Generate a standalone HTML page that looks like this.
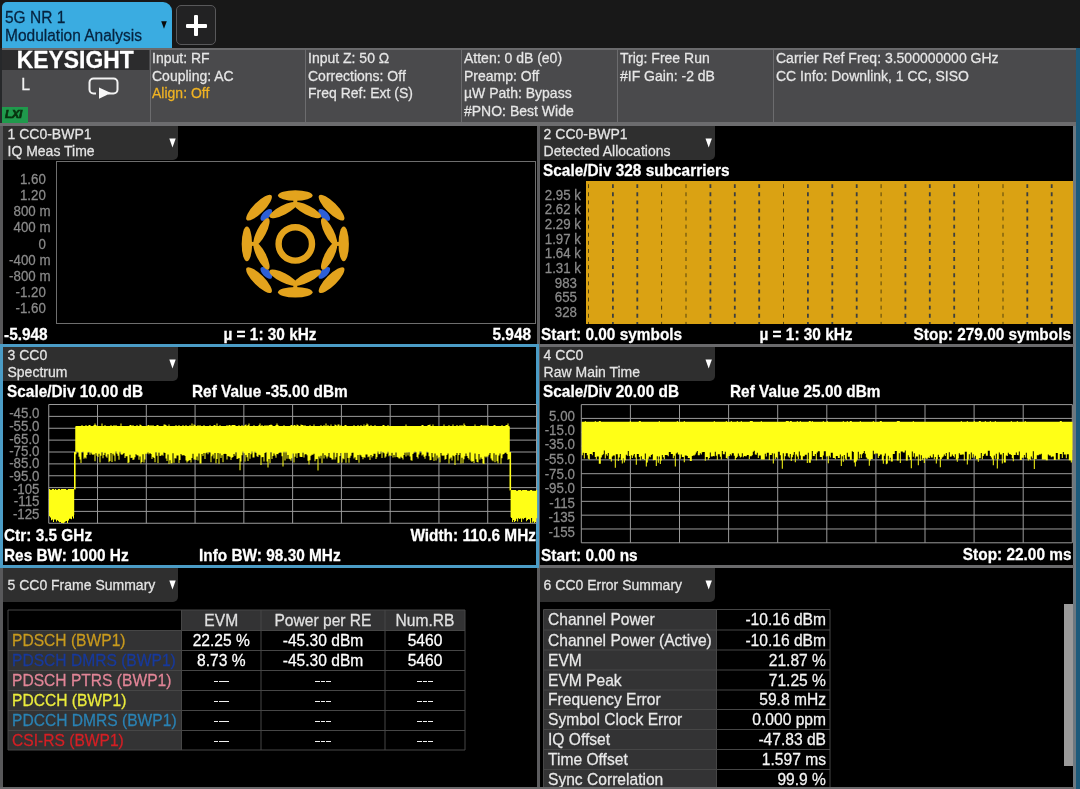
<!DOCTYPE html>
<html><head><meta charset="utf-8"><title>5G NR Modulation Analysis</title>
<style>
html,body{margin:0;padding:0;}
body{width:1080px;height:789px;overflow:hidden;position:relative;background:#181818;font-family:'Liberation Sans',sans-serif;will-change:transform;}
.t{position:absolute;white-space:nowrap;-webkit-text-stroke:0.25px;}
.r{position:absolute;}
svg{position:absolute;left:0;top:0;}
</style></head><body>

<div class="r" style="left:2px;top:1.5px;width:170px;height:47.5px;background:#3aace1;border-radius:5px 9px 0 0;"></div>
<div class="t" style="left:5px;top:9.29px;font-size:15.5px;line-height:17.82px;color:#06233f;font-weight:400;transform:scaleY(1.02);">5G NR 1</div>
<div class="t" style="left:5px;top:26.59px;font-size:15.5px;line-height:17.82px;color:#06233f;font-weight:400;transform:scaleY(1.02);">Modulation Analysis</div>
<svg width="1080" height="60"><path d="M161.2 21.3 L166.8 21.3 L164 28.8 Z" fill="#0a0a0a"/></svg>
<div class="r" style="left:176px;top:5px;width:38px;height:38px;background:#222223;border:1px solid #58585a;border-radius:5px;box-sizing:content-box;"></div>
<div class="r" style="left:186px;top:23.5px;width:20.5px;height:4px;background:#fff;border-radius:1px;"></div>
<div class="r" style="left:194.2px;top:15px;width:4px;height:20.5px;background:#fff;border-radius:1px;"></div>
<div class="r" style="left:0px;top:48px;width:1075.5px;height:75px;background:#4a4a4c;"></div>
<div class="r" style="left:0px;top:48px;width:1075.5px;height:1.5px;background:#6a6a6c;"></div>
<div class="r" style="left:0px;top:122.2px;width:1075.5px;height:3.8px;background:#6c6c6e;"></div>
<div class="r" style="left:1075.6px;top:48px;width:4.4px;height:741px;background:#1c5a7b;"></div>
<div class="r" style="left:1072.7px;top:126px;width:3px;height:663px;background:#6c7880;"></div>
<div class="r" style="left:1.5px;top:49.5px;width:147.5px;height:20.5px;background:#2c2c2d;"></div>
<div class="r" style="left:0px;top:48px;width:1.5px;height:75px;background:#26282a;"></div>
<div class="t" style="left:-124.8px;width:400px;text-align:center;top:47.34px;font-size:22.9px;line-height:26.33px;color:#ffffff;font-weight:700;transform:scaleY(1.03);">KEYSIGHT</div>
<div class="t" style="left:21.3px;top:76.12px;font-size:15.8px;line-height:18.17px;color:#f0f0f0;font-weight:400;transform:scaleY(1.02);">L</div>
<svg width="1080" height="130"><rect x="89.5" y="78.5" width="28" height="15" rx="4" ry="4" fill="none" stroke="#f2f2f2" stroke-width="2"/>
<rect x="96" y="91" width="12" height="5" fill="#4a4a4c"/>
<path d="M99 87.5 L111 93 L99 98.8 Z" fill="#f7f7f7"/></svg>
<div class="r" style="left:2px;top:107px;width:26px;height:16px;background:#1f9a4c;"></div>
<div class="t" style="left:5px;top:108.39px;font-size:11.5px;line-height:13.22px;color:#08330f;font-weight:700;font-style:italic;letter-spacing:-0.3px;-webkit-text-stroke:0.7px #08330f;transform:scaleY(1.02);">LXI</div>
<div class="r" style="left:150px;top:49px;width:1.4px;height:74px;background:#6c6c6e;"></div>
<div class="r" style="left:305px;top:49px;width:1.4px;height:74px;background:#6c6c6e;"></div>
<div class="r" style="left:461px;top:49px;width:1.4px;height:74px;background:#6c6c6e;"></div>
<div class="r" style="left:617px;top:49px;width:1.4px;height:74px;background:#6c6c6e;"></div>
<div class="r" style="left:773px;top:49px;width:1.4px;height:74px;background:#6c6c6e;"></div>
<div class="t" style="left:152px;top:49.75px;font-size:14px;line-height:16.1px;color:#e6e6e6;font-weight:400;transform:scaleY(1.02);">Input: RF</div>
<div class="t" style="left:152px;top:67.50px;font-size:14px;line-height:16.1px;color:#e6e6e6;font-weight:400;transform:scaleY(1.02);">Coupling: AC</div>
<div class="t" style="left:152px;top:85.25px;font-size:14px;line-height:16.1px;color:#e6e6e6;font-weight:400;transform:scaleY(1.02);"><span style="color:#f0b323">Align: Off</span></div>
<div class="t" style="left:308px;top:49.75px;font-size:14px;line-height:16.1px;color:#e6e6e6;font-weight:400;transform:scaleY(1.02);">Input Z: 50 &#937;</div>
<div class="t" style="left:308px;top:67.50px;font-size:14px;line-height:16.1px;color:#e6e6e6;font-weight:400;transform:scaleY(1.02);">Corrections: Off</div>
<div class="t" style="left:308px;top:85.25px;font-size:14px;line-height:16.1px;color:#e6e6e6;font-weight:400;transform:scaleY(1.02);">Freq Ref: Ext (S)</div>
<div class="t" style="left:464px;top:49.75px;font-size:14px;line-height:16.1px;color:#e6e6e6;font-weight:400;transform:scaleY(1.02);">Atten: 0 dB (e0)</div>
<div class="t" style="left:464px;top:67.50px;font-size:14px;line-height:16.1px;color:#e6e6e6;font-weight:400;transform:scaleY(1.02);">Preamp: Off</div>
<div class="t" style="left:464px;top:85.25px;font-size:14px;line-height:16.1px;color:#e6e6e6;font-weight:400;transform:scaleY(1.02);">&#181;W Path: Bypass</div>
<div class="t" style="left:464px;top:103.00px;font-size:14px;line-height:16.1px;color:#e6e6e6;font-weight:400;transform:scaleY(1.02);">#PNO: Best Wide</div>
<div class="t" style="left:620px;top:49.75px;font-size:14px;line-height:16.1px;color:#e6e6e6;font-weight:400;transform:scaleY(1.02);">Trig: Free Run</div>
<div class="t" style="left:620px;top:67.50px;font-size:14px;line-height:16.1px;color:#e6e6e6;font-weight:400;transform:scaleY(1.02);">#IF Gain: -2 dB</div>
<div class="t" style="left:776px;top:49.75px;font-size:14px;line-height:16.1px;color:#e6e6e6;font-weight:400;transform:scaleY(1.02);">Carrier Ref Freq: 3.500000000 GHz</div>
<div class="t" style="left:776px;top:67.50px;font-size:14px;line-height:16.1px;color:#e6e6e6;font-weight:400;transform:scaleY(1.02);">CC Info: Downlink, 1 CC, SISO</div>
<div class="r" style="left:0px;top:126px;width:1073px;height:663px;background:#000;"></div>
<div class="r" style="left:0px;top:126px;width:3px;height:663px;background:#58585a;"></div>
<div class="r" style="left:536.7px;top:126px;width:2.9px;height:663px;background:#5c5c5e;"></div>
<div class="r" style="left:0px;top:344px;width:1074px;height:2.5px;background:#6a6a6c;"></div>
<div class="r" style="left:0px;top:564.9px;width:1074px;height:2.9px;background:#6a6a6c;"></div>
<div class="r" style="left:0px;top:786.5px;width:1074px;height:2.5px;background:#6a6a6c;"></div>
<div class="r" style="left:0;top:343.5px;width:533.2px;height:218.6px;border:3px solid #4b9cc6;"></div>
<div class="r" style="left:3px;top:126px;width:175px;height:34px;background:#2f2f2f;border-radius:0 0 5px 0;"></div><div class="t" style="left:7.5px;top:126.45px;font-size:14px;line-height:16.1px;color:#e4e4e4;font-weight:400;transform:scaleY(1.02);">1 CC0-BWP1</div><div class="t" style="left:7.5px;top:143.45px;font-size:14px;line-height:16.1px;color:#e4e4e4;font-weight:400;transform:scaleY(1.02);">IQ Meas Time</div><svg width="1080" height="789"><path d="M169.3 138.5 L175.7 138.5 L172.5 147.5 Z" fill="#fff"/></svg>
<div class="r" style="left:56px;top:161px;width:478px;height:161px;border:1px solid #6e6e6e;"></div>
<div class="t" style="right:1034.2px;top:171.75px;font-size:13.3px;line-height:15.29px;color:#8a8a8a;font-weight:400;transform:scaleY(1.07);">1.60</div>
<div class="t" style="right:1034.2px;top:187.95px;font-size:13.3px;line-height:15.29px;color:#8a8a8a;font-weight:400;transform:scaleY(1.07);">1.20</div>
<div class="t" style="right:1029.5px;top:204.16px;font-size:13.3px;line-height:15.29px;color:#8a8a8a;font-weight:400;transform:scaleY(1.07);">800 m</div>
<div class="t" style="right:1029.5px;top:220.35px;font-size:13.3px;line-height:15.29px;color:#8a8a8a;font-weight:400;transform:scaleY(1.07);">400 m</div>
<div class="t" style="right:1034.2px;top:236.55px;font-size:13.3px;line-height:15.29px;color:#8a8a8a;font-weight:400;transform:scaleY(1.07);">0</div>
<div class="t" style="right:1029.5px;top:252.75px;font-size:13.3px;line-height:15.29px;color:#8a8a8a;font-weight:400;transform:scaleY(1.07);">-400 m</div>
<div class="t" style="right:1029.5px;top:268.96px;font-size:13.3px;line-height:15.29px;color:#8a8a8a;font-weight:400;transform:scaleY(1.07);">-800 m</div>
<div class="t" style="right:1034.2px;top:285.16px;font-size:13.3px;line-height:15.29px;color:#8a8a8a;font-weight:400;transform:scaleY(1.07);">-1.20</div>
<div class="t" style="right:1034.2px;top:301.36px;font-size:13.3px;line-height:15.29px;color:#8a8a8a;font-weight:400;transform:scaleY(1.07);">-1.60</div>
<div class="t" style="left:4px;top:326.44px;font-size:15.4px;line-height:17.71px;color:#fff;font-weight:700;transform:scaleY(1.02);">-5.948</div>
<div class="t" style="left:70px;width:400px;text-align:center;top:326.44px;font-size:15.4px;line-height:17.71px;color:#fff;font-weight:700;transform:scaleY(1.02);">&#181; = 1: 30 kHz</div>
<div class="t" style="right:549px;top:326.44px;font-size:15.4px;line-height:17.71px;color:#fff;font-weight:700;transform:scaleY(1.02);">5.948</div>
<svg width="1080" height="789"><ellipse cx="295.3" cy="202.9" rx="7.5" ry="3.6" fill="#2d5fd6" transform="rotate(45 295.3 243.9)"/><ellipse cx="295.3" cy="202.9" rx="7.5" ry="3.6" fill="#2d5fd6" transform="rotate(135 295.3 243.9)"/><ellipse cx="295.3" cy="202.9" rx="7.5" ry="3.6" fill="#2d5fd6" transform="rotate(225 295.3 243.9)"/><ellipse cx="295.3" cy="202.9" rx="7.5" ry="3.6" fill="#2d5fd6" transform="rotate(315 295.3 243.9)"/><g transform="rotate(0 295.3 243.9)" fill="#e3a31d"><ellipse cx="295.3" cy="195.5" rx="17.3" ry="5.2"/><ellipse cx="295.3" cy="192.60000000000002" rx="17.4" ry="5.4" transform="rotate(45 295.3 243.9)"/><ellipse cx="283.3" cy="210.10000000000002" rx="15.4" ry="4.6" transform="rotate(-27 283.3 210.10000000000002)"/><ellipse cx="307.3" cy="210.10000000000002" rx="15.4" ry="4.6" transform="rotate(27 307.3 210.10000000000002)"/><rect x="293.3" y="198.9" width="4" height="5"/></g><g transform="rotate(90 295.3 243.9)" fill="#e3a31d"><ellipse cx="295.3" cy="195.5" rx="17.3" ry="5.2"/><ellipse cx="295.3" cy="192.60000000000002" rx="17.4" ry="5.4" transform="rotate(45 295.3 243.9)"/><ellipse cx="283.3" cy="210.10000000000002" rx="15.4" ry="4.6" transform="rotate(-27 283.3 210.10000000000002)"/><ellipse cx="307.3" cy="210.10000000000002" rx="15.4" ry="4.6" transform="rotate(27 307.3 210.10000000000002)"/><rect x="293.3" y="198.9" width="4" height="5"/></g><g transform="rotate(180 295.3 243.9)" fill="#e3a31d"><ellipse cx="295.3" cy="195.5" rx="17.3" ry="5.2"/><ellipse cx="295.3" cy="192.60000000000002" rx="17.4" ry="5.4" transform="rotate(45 295.3 243.9)"/><ellipse cx="283.3" cy="210.10000000000002" rx="15.4" ry="4.6" transform="rotate(-27 283.3 210.10000000000002)"/><ellipse cx="307.3" cy="210.10000000000002" rx="15.4" ry="4.6" transform="rotate(27 307.3 210.10000000000002)"/><rect x="293.3" y="198.9" width="4" height="5"/></g><g transform="rotate(270 295.3 243.9)" fill="#e3a31d"><ellipse cx="295.3" cy="195.5" rx="17.3" ry="5.2"/><ellipse cx="295.3" cy="192.60000000000002" rx="17.4" ry="5.4" transform="rotate(45 295.3 243.9)"/><ellipse cx="283.3" cy="210.10000000000002" rx="15.4" ry="4.6" transform="rotate(-27 283.3 210.10000000000002)"/><ellipse cx="307.3" cy="210.10000000000002" rx="15.4" ry="4.6" transform="rotate(27 307.3 210.10000000000002)"/><rect x="293.3" y="198.9" width="4" height="5"/></g><circle cx="295.3" cy="243.9" r="16.7" fill="none" stroke="#e3a31d" stroke-width="6.4"/></svg>
<div class="r" style="left:540px;top:126px;width:175px;height:34px;background:#2f2f2f;border-radius:0 0 5px 0;"></div><div class="t" style="left:543.6px;top:126.45px;font-size:14px;line-height:16.1px;color:#e4e4e4;font-weight:400;transform:scaleY(1.02);">2 CC0-BWP1</div><div class="t" style="left:543.6px;top:143.45px;font-size:14px;line-height:16.1px;color:#e4e4e4;font-weight:400;transform:scaleY(1.02);">Detected Allocations</div><svg width="1080" height="789"><path d="M705.5 138.5 L711.9000000000001 138.5 L708.7 147.5 Z" fill="#fff"/></svg>
<div class="t" style="left:543px;top:162.25px;font-size:15.4px;line-height:17.71px;color:#fff;font-weight:700;transform:scaleY(1.02);">Scale/Div 328 subcarriers</div>
<div class="r" style="left:586.2px;top:181px;width:486.5px;height:143px;background:#daa213;"></div>
<svg width="1080" height="789"><line x1="588.5" y1="184.2" x2="588.5" y2="324" stroke="#55440e" stroke-width="1" stroke-dasharray="3.9 4.2"/><line x1="612.9" y1="184.2" x2="612.9" y2="324" stroke="#3c3f40" stroke-width="1.8" stroke-dasharray="3.9 4.2"/><line x1="637.3" y1="184.2" x2="637.3" y2="324" stroke="#3c3f40" stroke-width="1.8" stroke-dasharray="3.9 4.2"/><line x1="661.6" y1="184.2" x2="661.6" y2="324" stroke="#55440e" stroke-width="1" stroke-dasharray="3.9 4.2"/><line x1="686.0" y1="184.2" x2="686.0" y2="324" stroke="#55440e" stroke-width="1" stroke-dasharray="3.9 4.2"/><line x1="710.4" y1="184.2" x2="710.4" y2="324" stroke="#3c3f40" stroke-width="1.8" stroke-dasharray="3.9 4.2"/><line x1="734.8" y1="184.2" x2="734.8" y2="324" stroke="#3c3f40" stroke-width="1.8" stroke-dasharray="3.9 4.2"/><line x1="759.2" y1="184.2" x2="759.2" y2="324" stroke="#3c3f40" stroke-width="1.8" stroke-dasharray="3.9 4.2"/><line x1="783.5" y1="184.2" x2="783.5" y2="324" stroke="#55440e" stroke-width="1" stroke-dasharray="3.9 4.2"/><line x1="807.9" y1="184.2" x2="807.9" y2="324" stroke="#3c3f40" stroke-width="1.8" stroke-dasharray="3.9 4.2"/><line x1="832.3" y1="184.2" x2="832.3" y2="324" stroke="#3c3f40" stroke-width="1.8" stroke-dasharray="3.9 4.2"/><line x1="856.7" y1="184.2" x2="856.7" y2="324" stroke="#3c3f40" stroke-width="1.8" stroke-dasharray="3.9 4.2"/><line x1="881.1" y1="184.2" x2="881.1" y2="324" stroke="#55440e" stroke-width="1" stroke-dasharray="3.9 4.2"/><line x1="905.4" y1="184.2" x2="905.4" y2="324" stroke="#3c3f40" stroke-width="1.8" stroke-dasharray="3.9 4.2"/><line x1="929.8" y1="184.2" x2="929.8" y2="324" stroke="#3c3f40" stroke-width="1.8" stroke-dasharray="3.9 4.2"/><line x1="954.2" y1="184.2" x2="954.2" y2="324" stroke="#3c3f40" stroke-width="1.8" stroke-dasharray="3.9 4.2"/><line x1="978.6" y1="184.2" x2="978.6" y2="324" stroke="#55440e" stroke-width="1" stroke-dasharray="3.9 4.2"/><line x1="1003.0" y1="184.2" x2="1003.0" y2="324" stroke="#55440e" stroke-width="1" stroke-dasharray="3.9 4.2"/><line x1="1027.3" y1="184.2" x2="1027.3" y2="324" stroke="#3c3f40" stroke-width="1.8" stroke-dasharray="3.9 4.2"/><line x1="1051.7" y1="184.2" x2="1051.7" y2="324" stroke="#3c3f40" stroke-width="1.8" stroke-dasharray="3.9 4.2"/></svg>
<div class="t" style="right:499px;top:187.66px;font-size:13.3px;line-height:15.29px;color:#8a8a8a;font-weight:400;transform:scaleY(1.07);">2.95 k</div>
<div class="t" style="right:499px;top:202.34px;font-size:13.3px;line-height:15.29px;color:#8a8a8a;font-weight:400;transform:scaleY(1.07);">2.62 k</div>
<div class="t" style="right:499px;top:217.02px;font-size:13.3px;line-height:15.29px;color:#8a8a8a;font-weight:400;transform:scaleY(1.07);">2.29 k</div>
<div class="t" style="right:499px;top:231.69px;font-size:13.3px;line-height:15.29px;color:#8a8a8a;font-weight:400;transform:scaleY(1.07);">1.97 k</div>
<div class="t" style="right:499px;top:246.38px;font-size:13.3px;line-height:15.29px;color:#8a8a8a;font-weight:400;transform:scaleY(1.07);">1.64 k</div>
<div class="t" style="right:499px;top:261.06px;font-size:13.3px;line-height:15.29px;color:#8a8a8a;font-weight:400;transform:scaleY(1.07);">1.31 k</div>
<div class="t" style="right:503px;top:275.74px;font-size:13.3px;line-height:15.29px;color:#8a8a8a;font-weight:400;transform:scaleY(1.07);">983</div>
<div class="t" style="right:503px;top:290.42px;font-size:13.3px;line-height:15.29px;color:#8a8a8a;font-weight:400;transform:scaleY(1.07);">655</div>
<div class="t" style="right:503px;top:305.10px;font-size:13.3px;line-height:15.29px;color:#8a8a8a;font-weight:400;transform:scaleY(1.07);">328</div>
<div class="t" style="left:541px;top:326.44px;font-size:15.4px;line-height:17.71px;color:#fff;font-weight:700;transform:scaleY(1.02);">Start: 0.00 symbols</div>
<div class="t" style="left:606px;width:400px;text-align:center;top:326.44px;font-size:15.4px;line-height:17.71px;color:#fff;font-weight:700;transform:scaleY(1.02);">&#181; = 1: 30 kHz</div>
<div class="t" style="right:9px;top:326.44px;font-size:15.4px;line-height:17.71px;color:#fff;font-weight:700;transform:scaleY(1.02);">Stop: 279.00 symbols</div>
<div class="r" style="left:3px;top:347px;width:175px;height:34px;background:#2f2f2f;border-radius:0 0 5px 0;"></div><div class="t" style="left:7.5px;top:347.45px;font-size:14px;line-height:16.1px;color:#e4e4e4;font-weight:400;transform:scaleY(1.02);">3 CC0</div><div class="t" style="left:7.5px;top:364.45px;font-size:14px;line-height:16.1px;color:#e4e4e4;font-weight:400;transform:scaleY(1.02);">Spectrum</div><svg width="1080" height="789"><path d="M169.3 359.5 L175.7 359.5 L172.5 368.5 Z" fill="#fff"/></svg>
<div class="t" style="left:7px;top:383.04px;font-size:15.4px;line-height:17.71px;color:#fff;font-weight:700;transform:scaleY(1.02);">Scale/Div 10.00 dB</div>
<div class="t" style="left:192px;top:383.04px;font-size:15.4px;line-height:17.71px;color:#fff;font-weight:700;transform:scaleY(1.02);">Ref Value -35.00 dBm</div>
<svg width="1080" height="789"><line x1="48.75" y1="404.5" x2="48.75" y2="523.25" stroke="#9a9a9a" stroke-width="1"/><line x1="48.75" y1="404.50" x2="536.5" y2="404.50" stroke="#9a9a9a" stroke-width="1"/><line x1="97.53" y1="404.5" x2="97.53" y2="523.25" stroke="#9a9a9a" stroke-width="1"/><line x1="48.75" y1="416.38" x2="536.5" y2="416.38" stroke="#9a9a9a" stroke-width="1"/><line x1="146.30" y1="404.5" x2="146.30" y2="523.25" stroke="#9a9a9a" stroke-width="1"/><line x1="48.75" y1="428.25" x2="536.5" y2="428.25" stroke="#9a9a9a" stroke-width="1"/><line x1="195.07" y1="404.5" x2="195.07" y2="523.25" stroke="#9a9a9a" stroke-width="1"/><line x1="48.75" y1="440.12" x2="536.5" y2="440.12" stroke="#9a9a9a" stroke-width="1"/><line x1="243.85" y1="404.5" x2="243.85" y2="523.25" stroke="#9a9a9a" stroke-width="1"/><line x1="48.75" y1="452.00" x2="536.5" y2="452.00" stroke="#9a9a9a" stroke-width="1"/><line x1="292.62" y1="404.5" x2="292.62" y2="523.25" stroke="#9a9a9a" stroke-width="1"/><line x1="48.75" y1="463.88" x2="536.5" y2="463.88" stroke="#9a9a9a" stroke-width="1"/><line x1="341.40" y1="404.5" x2="341.40" y2="523.25" stroke="#9a9a9a" stroke-width="1"/><line x1="48.75" y1="475.75" x2="536.5" y2="475.75" stroke="#9a9a9a" stroke-width="1"/><line x1="390.18" y1="404.5" x2="390.18" y2="523.25" stroke="#9a9a9a" stroke-width="1"/><line x1="48.75" y1="487.62" x2="536.5" y2="487.62" stroke="#9a9a9a" stroke-width="1"/><line x1="438.95" y1="404.5" x2="438.95" y2="523.25" stroke="#9a9a9a" stroke-width="1"/><line x1="48.75" y1="499.50" x2="536.5" y2="499.50" stroke="#9a9a9a" stroke-width="1"/><line x1="487.73" y1="404.5" x2="487.73" y2="523.25" stroke="#9a9a9a" stroke-width="1"/><line x1="48.75" y1="511.38" x2="536.5" y2="511.38" stroke="#9a9a9a" stroke-width="1"/><line x1="536.50" y1="404.5" x2="536.50" y2="523.25" stroke="#9a9a9a" stroke-width="1"/><line x1="48.75" y1="523.25" x2="536.5" y2="523.25" stroke="#9a9a9a" stroke-width="1"/><rect x="75.5" y="427" width="434" height="24.5" fill="#ffff16"/><rect x="49" y="490" width="25.2" height="25" fill="#ffff16"/><rect x="510.6" y="491" width="25.8" height="26" fill="#ffff16"/><path d="M49.0 489.0h1.0V516.3h-1.0zM50.0 489.8h1.0V517.5h-1.0zM51.0 489.8h1.0V520.2h-1.0zM52.0 489.0h1.0V519.5h-1.0zM53.0 489.0h1.0V521.9h-1.0zM54.0 489.8h1.0V519.5h-1.0zM55.0 489.0h1.0V519.6h-1.0zM56.0 489.8h1.0V521.4h-1.0zM57.0 489.8h1.0V520.3h-1.0zM58.0 489.0h1.0V521.2h-1.0zM59.0 489.0h1.0V522.2h-1.0zM60.0 489.8h1.0V521.9h-1.0zM61.0 489.0h1.0V523.0h-1.0zM62.0 489.0h1.0V523.1h-1.0zM63.0 489.0h1.0V523.2h-1.0zM64.0 489.0h1.0V522.6h-1.0zM65.0 489.0h1.0V521.4h-1.0zM66.0 489.8h1.0V521.1h-1.0zM67.0 489.8h1.0V523.0h-1.0zM68.0 489.0h1.0V520.5h-1.0zM69.0 489.0h1.0V518.7h-1.0zM70.0 489.0h1.0V518.7h-1.0zM71.0 489.0h1.0V519.2h-1.0zM72.0 489.0h1.0V516.6h-1.0zM73.0 489.0h1.0V518.6h-1.0zM74.0 452.0h1.6V489.5h-1.6zM75.5 426.0h1.0V454.2h-1.0zM76.5 426.0h1.0V451.3h-1.0zM77.5 426.0h1.0V452.3h-1.0zM78.5 426.0h1.0V456.7h-1.0zM79.5 426.0h1.0V459.6h-1.0zM80.5 426.0h1.0V463.1h-1.0zM81.5 425.0h1.0V452.0h-1.0zM82.5 426.0h1.0V451.4h-1.0zM83.5 426.0h1.0V458.8h-1.0zM84.5 426.0h1.0V457.6h-1.0zM85.5 425.0h1.0V458.5h-1.0zM86.5 426.0h1.0V455.1h-1.0zM87.5 426.0h1.0V452.3h-1.0zM88.5 425.0h1.0V451.7h-1.0zM89.5 425.0h1.0V454.8h-1.0zM90.5 426.0h1.0V452.5h-1.0zM91.5 426.0h1.0V454.3h-1.0zM92.5 426.0h1.0V455.1h-1.0zM93.5 425.0h1.0V454.2h-1.0zM94.5 423.5h1.0V461.3h-1.0zM95.5 425.0h1.0V453.2h-1.0zM96.5 426.0h1.0V455.7h-1.0zM97.5 426.0h1.0V456.9h-1.0zM98.5 426.0h1.0V453.8h-1.0zM99.5 426.0h1.0V462.4h-1.0zM100.5 426.0h1.0V455.8h-1.0zM101.5 423.5h1.0V451.9h-1.0zM102.5 426.0h1.0V458.2h-1.0zM103.5 426.0h1.0V454.9h-1.0zM104.5 425.0h1.0V452.7h-1.0zM105.5 426.0h1.0V456.6h-1.0zM106.5 426.0h1.0V457.7h-1.0zM107.5 426.0h1.0V454.3h-1.0zM108.5 426.0h1.0V462.3h-1.0zM109.5 426.0h1.0V461.0h-1.0zM110.5 425.0h1.0V453.0h-1.0zM111.5 426.0h1.0V462.1h-1.0zM112.5 426.0h1.0V453.8h-1.0zM113.5 425.0h1.0V455.5h-1.0zM114.5 426.0h1.0V461.3h-1.0zM115.5 425.0h1.0V450.9h-1.0zM116.5 426.0h1.0V453.8h-1.0zM117.5 426.0h1.0V455.8h-1.0zM118.5 426.0h1.0V459.8h-1.0zM119.5 426.0h1.0V451.6h-1.0zM120.5 423.5h1.0V454.2h-1.0zM121.5 426.0h1.0V455.0h-1.0zM122.5 426.0h1.0V454.1h-1.0zM123.5 426.0h1.0V453.0h-1.0zM124.5 426.0h1.0V457.9h-1.0zM125.5 426.0h1.0V456.2h-1.0zM126.5 426.0h1.0V456.2h-1.0zM127.5 426.0h1.0V462.9h-1.0zM128.5 426.0h1.0V462.5h-1.0zM129.5 425.0h1.0V454.8h-1.0zM130.5 425.0h1.0V458.1h-1.0zM131.5 426.0h1.0V457.7h-1.0zM132.5 425.0h1.0V459.9h-1.0zM133.5 426.0h1.0V459.4h-1.0zM134.5 426.0h1.0V457.3h-1.0zM135.5 426.0h1.0V454.2h-1.0zM136.5 425.0h1.0V455.2h-1.0zM137.5 426.0h1.0V455.5h-1.0zM138.5 426.0h1.0V459.8h-1.0zM139.5 424.5h1.0V456.5h-1.0zM140.5 425.0h1.0V463.4h-1.0zM141.5 426.0h1.0V462.1h-1.0zM142.5 426.0h1.0V454.3h-1.0zM143.5 426.0h1.0V462.4h-1.0zM144.5 426.0h1.0V459.6h-1.0zM145.5 426.0h1.0V453.8h-1.0zM146.5 426.0h1.0V453.7h-1.0zM147.5 425.0h1.0V452.2h-1.0zM148.5 425.0h1.0V454.3h-1.0zM149.5 426.0h1.0V453.0h-1.0zM150.5 425.0h1.0V454.1h-1.0zM151.5 426.0h1.0V459.1h-1.0zM152.5 425.0h1.0V457.0h-1.0zM153.5 426.0h1.0V457.9h-1.0zM154.5 426.0h1.0V462.3h-1.0zM155.5 426.0h1.0V451.9h-1.0zM156.5 425.0h1.0V455.8h-1.0zM157.5 425.0h1.0V463.0h-1.0zM158.5 426.0h1.0V452.6h-1.0zM159.5 426.0h1.0V455.9h-1.0zM160.5 426.0h1.0V455.8h-1.0zM161.5 426.0h1.0V454.8h-1.0zM162.5 426.0h1.0V455.7h-1.0zM163.5 424.5h1.0V452.2h-1.0zM164.5 424.5h1.0V452.9h-1.0zM165.5 425.0h1.0V458.5h-1.0zM166.5 426.0h1.0V461.1h-1.0zM167.5 426.0h1.0V454.5h-1.0zM168.5 424.5h1.0V463.9h-1.0zM169.5 426.0h1.0V460.2h-1.0zM170.5 426.0h1.0V463.6h-1.0zM171.5 426.0h1.0V463.2h-1.0zM172.5 426.0h1.0V453.3h-1.0zM173.5 426.0h1.0V462.8h-1.0zM174.5 426.0h1.0V458.3h-1.0zM175.5 425.0h1.0V458.4h-1.0zM176.5 426.0h1.0V455.5h-1.0zM177.5 426.0h1.0V455.5h-1.0zM178.5 425.0h1.0V462.9h-1.0zM179.5 426.0h1.0V459.9h-1.0zM180.5 426.0h1.0V453.9h-1.0zM181.5 426.0h1.0V455.2h-1.0zM182.5 425.0h1.0V455.5h-1.0zM183.5 426.0h1.0V455.0h-1.0zM184.5 426.0h1.0V456.1h-1.0zM185.5 425.0h1.0V460.5h-1.0zM186.5 426.0h1.0V462.6h-1.0zM187.5 426.0h1.0V461.3h-1.0zM188.5 426.0h1.0V460.5h-1.0zM189.5 425.0h1.0V460.1h-1.0zM190.5 426.0h1.0V462.4h-1.0zM191.5 423.5h1.0V457.9h-1.0zM192.5 426.0h1.0V453.7h-1.0zM193.5 424.5h1.0V459.4h-1.0zM194.5 425.0h1.0V459.6h-1.0zM195.5 426.0h1.0V459.9h-1.0zM196.5 426.0h1.0V456.5h-1.0zM197.5 425.0h1.0V460.6h-1.0zM198.5 426.0h1.0V453.6h-1.0zM199.5 425.0h1.0V463.4h-1.0zM200.5 426.0h1.0V463.6h-1.0zM201.5 426.0h1.0V454.0h-1.0zM202.5 426.0h1.0V456.0h-1.0zM203.5 425.0h1.0V453.1h-1.0zM204.5 426.0h1.0V459.0h-1.0zM205.5 426.0h1.0V453.2h-1.0zM206.5 426.0h1.0V452.2h-1.0zM207.5 426.0h1.0V454.3h-1.0zM208.5 426.0h1.0V452.1h-1.0zM209.5 425.0h1.0V452.3h-1.0zM210.5 426.0h1.0V462.3h-1.0zM211.5 426.0h1.0V456.3h-1.0zM212.5 426.0h1.0V454.6h-1.0zM213.5 425.0h1.0V458.6h-1.0zM214.5 425.0h1.0V453.0h-1.0zM215.5 426.0h1.0V463.2h-1.0zM216.5 423.5h1.0V458.9h-1.0zM217.5 426.0h1.0V453.1h-1.0zM218.5 426.0h1.0V463.8h-1.0zM219.5 425.0h1.0V453.6h-1.0zM220.5 426.0h1.0V458.0h-1.0zM221.5 426.0h1.0V455.3h-1.0zM222.5 426.0h1.0V462.3h-1.0zM223.5 426.0h1.0V454.0h-1.0zM224.5 426.0h1.0V453.7h-1.0zM225.5 426.0h1.0V453.9h-1.0zM226.5 425.0h1.0V459.4h-1.0zM227.5 426.0h1.0V456.1h-1.0zM228.5 425.0h1.0V456.4h-1.0zM229.5 425.0h1.0V456.8h-1.0zM230.5 426.0h1.0V460.0h-1.0zM231.5 425.0h1.0V457.8h-1.0zM232.5 425.0h1.0V456.9h-1.0zM233.5 425.0h1.0V454.0h-1.0zM234.5 425.0h1.0V455.8h-1.0zM235.5 426.0h1.0V452.0h-1.0zM236.5 426.0h1.0V458.9h-1.0zM237.5 426.0h1.0V458.8h-1.0zM238.5 425.0h1.0V458.0h-1.0zM239.5 426.0h1.0V470.3h-1.0zM240.5 426.0h1.0V461.5h-1.0zM241.5 425.0h1.0V455.3h-1.0zM242.5 426.0h1.0V451.3h-1.0zM243.5 426.0h1.0V453.3h-1.0zM244.5 425.0h1.0V461.4h-1.0zM245.5 424.5h1.0V454.9h-1.0zM246.5 426.0h1.0V457.2h-1.0zM247.5 425.0h1.0V461.0h-1.0zM248.5 423.5h1.0V452.9h-1.0zM249.5 426.0h1.0V458.8h-1.0zM250.5 426.0h1.0V454.3h-1.0zM251.5 426.0h1.0V450.1h-1.0zM252.5 426.0h1.0V457.4h-1.0zM253.5 425.0h1.0V457.5h-1.0zM254.5 426.0h1.0V451.6h-1.0zM255.5 426.0h1.0V452.8h-1.0zM256.5 426.0h1.0V456.2h-1.0zM257.5 426.0h1.0V457.0h-1.0zM258.5 425.0h1.0V454.7h-1.0zM259.5 423.5h1.0V455.2h-1.0zM260.5 426.0h1.0V465.0h-1.0zM261.5 425.0h1.0V457.2h-1.0zM262.5 426.0h1.0V456.9h-1.0zM263.5 426.0h1.0V461.5h-1.0zM264.5 425.0h1.0V453.0h-1.0zM265.5 426.0h1.0V452.1h-1.0zM266.5 425.0h1.0V461.4h-1.0zM267.5 426.0h1.0V467.6h-1.0zM268.5 425.0h1.0V459.1h-1.0zM269.5 425.0h1.0V462.9h-1.0zM270.5 424.5h1.0V452.1h-1.0zM271.5 425.0h1.0V459.0h-1.0zM272.5 426.0h1.0V456.0h-1.0zM273.5 426.0h1.0V453.6h-1.0zM274.5 426.0h1.0V455.5h-1.0zM275.5 425.0h1.0V457.8h-1.0zM276.5 423.5h1.0V453.9h-1.0zM277.5 425.0h1.0V454.2h-1.0zM278.5 426.0h1.0V452.9h-1.0zM279.5 426.0h1.0V452.2h-1.0zM280.5 426.0h1.0V452.6h-1.0zM281.5 426.0h1.0V456.2h-1.0zM282.5 426.0h1.0V466.5h-1.0zM283.5 425.0h1.0V451.5h-1.0zM284.5 426.0h1.0V460.5h-1.0zM285.5 426.0h1.0V451.4h-1.0zM286.5 426.0h1.0V458.8h-1.0zM287.5 426.0h1.0V455.0h-1.0zM288.5 426.0h1.0V458.8h-1.0zM289.5 426.0h1.0V459.2h-1.0zM290.5 425.0h1.0V460.7h-1.0zM291.5 425.0h1.0V458.3h-1.0zM292.5 426.0h1.0V453.6h-1.0zM293.5 425.0h1.0V462.4h-1.0zM294.5 425.0h1.0V456.7h-1.0zM295.5 426.0h1.0V453.6h-1.0zM296.5 424.5h1.0V457.9h-1.0zM297.5 425.0h1.0V453.3h-1.0zM298.5 426.0h1.0V452.9h-1.0zM299.5 426.0h1.0V456.7h-1.0zM300.5 424.5h1.0V457.1h-1.0zM301.5 425.0h1.0V457.0h-1.0zM302.5 425.0h1.0V452.5h-1.0zM303.5 426.0h1.0V457.5h-1.0zM304.5 425.0h1.0V454.6h-1.0zM305.5 426.0h1.0V454.0h-1.0zM306.5 426.0h1.0V455.2h-1.0zM307.5 426.0h1.0V460.7h-1.0zM308.5 426.0h1.0V464.4h-1.0zM309.5 425.0h1.0V460.3h-1.0zM310.5 426.0h1.0V455.8h-1.0zM311.5 426.0h1.0V454.7h-1.0zM312.5 426.0h1.0V454.8h-1.0zM313.5 424.5h1.0V453.8h-1.0zM314.5 426.0h1.0V461.2h-1.0zM315.5 426.0h1.0V459.3h-1.0zM316.5 426.0h1.0V459.0h-1.0zM317.5 426.0h1.0V470.5h-1.0zM318.5 426.0h1.0V456.4h-1.0zM319.5 426.0h1.0V458.4h-1.0zM320.5 425.0h1.0V455.8h-1.0zM321.5 426.0h1.0V463.2h-1.0zM322.5 426.0h1.0V453.3h-1.0zM323.5 425.0h1.0V458.5h-1.0zM324.5 426.0h1.0V455.0h-1.0zM325.5 423.5h1.0V456.5h-1.0zM326.5 426.0h1.0V458.5h-1.0zM327.5 425.0h1.0V456.4h-1.0zM328.5 426.0h1.0V453.0h-1.0zM329.5 426.0h1.0V457.4h-1.0zM330.5 424.5h1.0V458.0h-1.0zM331.5 426.0h1.0V459.6h-1.0zM332.5 426.0h1.0V459.5h-1.0zM333.5 426.0h1.0V452.4h-1.0zM334.5 424.5h1.0V459.4h-1.0zM335.5 425.0h1.0V457.3h-1.0zM336.5 426.0h1.0V452.9h-1.0zM337.5 424.5h1.0V462.9h-1.0zM338.5 424.5h1.0V462.7h-1.0zM339.5 426.0h1.0V455.9h-1.0zM340.5 425.0h1.0V452.9h-1.0zM341.5 426.0h1.0V462.5h-1.0zM342.5 426.0h1.0V458.5h-1.0zM343.5 426.0h1.0V459.3h-1.0zM344.5 425.0h1.0V452.8h-1.0zM345.5 425.0h1.0V462.8h-1.0zM346.5 426.0h1.0V452.8h-1.0zM347.5 426.0h1.0V458.1h-1.0zM348.5 426.0h1.0V462.7h-1.0zM349.5 426.0h1.0V457.8h-1.0zM350.5 426.0h1.0V455.7h-1.0zM351.5 426.0h1.0V452.7h-1.0zM352.5 426.0h1.0V452.5h-1.0zM353.5 425.0h1.0V458.6h-1.0zM354.5 426.0h1.0V457.2h-1.0zM355.5 426.0h1.0V459.9h-1.0zM356.5 426.0h1.0V460.1h-1.0zM357.5 425.0h1.0V455.1h-1.0zM358.5 426.0h1.0V462.7h-1.0zM359.5 426.0h1.0V454.8h-1.0zM360.5 425.0h1.0V455.6h-1.0zM361.5 426.0h1.0V457.1h-1.0zM362.5 426.0h1.0V459.3h-1.0zM363.5 424.5h1.0V457.3h-1.0zM364.5 426.0h1.0V457.7h-1.0zM365.5 425.0h1.0V454.6h-1.0zM366.5 423.5h1.0V454.4h-1.0zM367.5 424.5h1.0V457.2h-1.0zM368.5 426.0h1.0V456.4h-1.0zM369.5 426.0h1.0V460.1h-1.0zM370.5 425.0h1.0V455.1h-1.0zM371.5 426.0h1.0V457.6h-1.0zM372.5 426.0h1.0V456.1h-1.0zM373.5 426.0h1.0V453.8h-1.0zM374.5 425.0h1.0V453.7h-1.0zM375.5 426.0h1.0V459.1h-1.0zM376.5 426.0h1.0V457.2h-1.0zM377.5 426.0h1.0V451.1h-1.0zM378.5 426.0h1.0V454.3h-1.0zM379.5 426.0h1.0V454.1h-1.0zM380.5 426.0h1.0V451.0h-1.0zM381.5 426.0h1.0V458.1h-1.0zM382.5 425.0h1.0V451.9h-1.0zM383.5 425.0h1.0V453.2h-1.0zM384.5 426.0h1.0V457.8h-1.0zM385.5 426.0h1.0V456.6h-1.0zM386.5 426.0h1.0V453.8h-1.0zM387.5 425.0h1.0V451.5h-1.0zM388.5 426.0h1.0V456.2h-1.0zM389.5 426.0h1.0V455.2h-1.0zM390.5 426.0h1.0V456.1h-1.0zM391.5 426.0h1.0V452.7h-1.0zM392.5 426.0h1.0V457.5h-1.0zM393.5 426.0h1.0V455.1h-1.0zM394.5 426.0h1.0V457.3h-1.0zM395.5 426.0h1.0V452.2h-1.0zM396.5 426.0h1.0V457.0h-1.0zM397.5 426.0h1.0V457.6h-1.0zM398.5 426.0h1.0V458.4h-1.0zM399.5 426.0h1.0V458.5h-1.0zM400.5 426.0h1.0V456.8h-1.0zM401.5 426.0h1.0V458.1h-1.0zM402.5 426.0h1.0V459.5h-1.0zM403.5 426.0h1.0V455.1h-1.0zM404.5 426.0h1.0V452.4h-1.0zM405.5 424.5h1.0V456.5h-1.0zM406.5 426.0h1.0V452.2h-1.0zM407.5 426.0h1.0V455.6h-1.0zM408.5 426.0h1.0V451.9h-1.0zM409.5 426.0h1.0V456.6h-1.0zM410.5 426.0h1.0V460.3h-1.0zM411.5 426.0h1.0V460.8h-1.0zM412.5 426.0h1.0V453.9h-1.0zM413.5 426.0h1.0V452.5h-1.0zM414.5 426.0h1.0V451.3h-1.0zM415.5 426.0h1.0V452.1h-1.0zM416.5 426.0h1.0V457.1h-1.0zM417.5 426.0h1.0V458.4h-1.0zM418.5 426.0h1.0V454.6h-1.0zM419.5 426.0h1.0V451.0h-1.0zM420.5 426.0h1.0V451.2h-1.0zM421.5 425.0h1.0V455.4h-1.0zM422.5 425.0h1.0V454.6h-1.0zM423.5 426.0h1.0V456.8h-1.0zM424.5 426.0h1.0V458.8h-1.0zM425.5 426.0h1.0V455.8h-1.0zM426.5 426.0h1.0V451.5h-1.0zM427.5 425.0h1.0V452.2h-1.0zM428.5 425.0h1.0V456.3h-1.0zM429.5 424.5h1.0V460.3h-1.0zM430.5 426.0h1.0V459.9h-1.0zM431.5 426.0h1.0V453.0h-1.0zM432.5 424.5h1.0V457.3h-1.0zM433.5 426.0h1.0V460.9h-1.0zM434.5 426.0h1.0V453.6h-1.0zM435.5 426.0h1.0V460.4h-1.0zM436.5 426.0h1.0V455.6h-1.0zM437.5 426.0h1.0V458.5h-1.0zM438.5 426.0h1.0V457.2h-1.0zM439.5 426.0h1.0V462.4h-1.0zM440.5 426.0h1.0V453.1h-1.0zM441.5 426.0h1.0V455.6h-1.0zM442.5 426.0h1.0V455.7h-1.0zM443.5 424.5h1.0V455.4h-1.0zM444.5 426.0h1.0V459.8h-1.0zM445.5 426.0h1.0V459.0h-1.0zM446.5 426.0h1.0V454.9h-1.0zM447.5 426.0h1.0V453.6h-1.0zM448.5 425.0h1.0V463.4h-1.0zM449.5 426.0h1.0V458.7h-1.0zM450.5 426.0h1.0V457.6h-1.0zM451.5 426.0h1.0V460.5h-1.0zM452.5 424.5h1.0V455.6h-1.0zM453.5 426.0h1.0V456.3h-1.0zM454.5 426.0h1.0V465.1h-1.0zM455.5 426.0h1.0V455.1h-1.0zM456.5 425.0h1.0V453.1h-1.0zM457.5 426.0h1.0V460.5h-1.0zM458.5 426.0h1.0V455.1h-1.0zM459.5 425.0h1.0V453.0h-1.0zM460.5 426.0h1.0V463.5h-1.0zM461.5 425.0h1.0V457.8h-1.0zM462.5 426.0h1.0V463.2h-1.0zM463.5 423.5h1.0V459.2h-1.0zM464.5 425.0h1.0V456.2h-1.0zM465.5 426.0h1.0V453.5h-1.0zM466.5 426.0h1.0V456.0h-1.0zM467.5 426.0h1.0V458.1h-1.0zM468.5 426.0h1.0V459.5h-1.0zM469.5 426.0h1.0V452.3h-1.0zM470.5 426.0h1.0V460.8h-1.0zM471.5 426.0h1.0V462.1h-1.0zM472.5 426.0h1.0V461.0h-1.0zM473.5 426.0h1.0V463.1h-1.0zM474.5 424.5h1.0V453.4h-1.0zM475.5 426.0h1.0V459.3h-1.0zM476.5 426.0h1.0V462.0h-1.0zM477.5 426.0h1.0V462.6h-1.0zM478.5 426.0h1.0V453.9h-1.0zM479.5 426.0h1.0V459.5h-1.0zM480.5 425.0h1.0V457.5h-1.0zM481.5 425.0h1.0V459.0h-1.0zM482.5 426.0h1.0V463.4h-1.0zM483.5 425.0h1.0V464.0h-1.0zM484.5 426.0h1.0V456.5h-1.0zM485.5 425.0h1.0V457.4h-1.0zM486.5 426.0h1.0V456.5h-1.0zM487.5 425.0h1.0V456.4h-1.0zM488.5 426.0h1.0V454.7h-1.0zM489.5 426.0h1.0V453.1h-1.0zM490.5 426.0h1.0V458.5h-1.0zM491.5 426.0h1.0V460.3h-1.0zM492.5 426.0h1.0V461.3h-1.0zM493.5 425.0h1.0V453.2h-1.0zM494.5 425.0h1.0V462.3h-1.0zM495.5 426.0h1.0V454.7h-1.0zM496.5 426.0h1.0V461.2h-1.0zM497.5 426.0h1.0V463.2h-1.0zM498.5 426.0h1.0V455.6h-1.0zM499.5 426.0h1.0V453.4h-1.0zM500.5 426.0h1.0V463.7h-1.0zM501.5 425.0h1.0V458.3h-1.0zM502.5 426.0h1.0V454.5h-1.0zM503.5 426.0h1.0V453.9h-1.0zM504.5 426.0h1.0V452.8h-1.0zM505.5 425.0h1.0V452.6h-1.0zM506.5 425.0h1.0V453.9h-1.0zM507.5 423.5h1.0V459.7h-1.0zM508.5 426.0h1.0V459.1h-1.0zM509.5 452.0h1.6V490.5h-1.6zM511.1 490.0h1.0V518.0h-1.0zM512.1 490.0h1.0V522.1h-1.0zM513.1 490.0h1.0V520.0h-1.0zM514.1 490.0h1.0V522.0h-1.0zM515.1 490.0h1.0V521.0h-1.0zM516.1 490.8h1.0V518.7h-1.0zM517.1 490.8h1.0V521.4h-1.0zM518.1 490.0h1.0V518.3h-1.0zM519.1 490.0h1.0V519.0h-1.0zM520.1 490.0h1.0V518.4h-1.0zM521.1 490.8h1.0V522.1h-1.0zM522.1 490.0h1.0V518.4h-1.0zM523.1 490.0h1.0V519.2h-1.0zM524.1 490.0h1.0V518.1h-1.0zM525.1 490.0h1.0V517.8h-1.0zM526.1 490.0h1.0V521.2h-1.0zM527.1 490.8h1.0V520.1h-1.0zM528.1 490.8h1.0V518.9h-1.0zM529.1 490.8h1.0V519.5h-1.0zM530.1 490.0h1.0V523.0h-1.0zM531.1 490.0h1.0V518.0h-1.0zM532.1 490.8h1.0V522.4h-1.0zM533.1 490.8h1.0V521.5h-1.0zM534.1 490.8h1.0V522.9h-1.0zM535.1 490.8h1.0V521.9h-1.0zM536.1 490.0h1.0V518.3h-1.0z" fill="#ffff16"/></svg>
<div class="t" style="right:1040.5px;top:406.11px;font-size:13.3px;line-height:15.29px;color:#8a8a8a;font-weight:400;transform:scaleY(1.07);">-45.0</div>
<div class="t" style="right:1040.5px;top:419.11px;font-size:13.3px;line-height:15.29px;color:#8a8a8a;font-weight:400;transform:scaleY(1.07);">-55.0</div>
<div class="t" style="right:1040.5px;top:431.61px;font-size:13.3px;line-height:15.29px;color:#8a8a8a;font-weight:400;transform:scaleY(1.07);">-65.0</div>
<div class="t" style="right:1040.5px;top:444.11px;font-size:13.3px;line-height:15.29px;color:#8a8a8a;font-weight:400;transform:scaleY(1.07);">-75.0</div>
<div class="t" style="right:1040.5px;top:456.11px;font-size:13.3px;line-height:15.29px;color:#8a8a8a;font-weight:400;transform:scaleY(1.07);">-85.0</div>
<div class="t" style="right:1040.5px;top:468.61px;font-size:13.3px;line-height:15.29px;color:#8a8a8a;font-weight:400;transform:scaleY(1.07);">-95.0</div>
<div class="t" style="right:1040.5px;top:481.61px;font-size:13.3px;line-height:15.29px;color:#8a8a8a;font-weight:400;transform:scaleY(1.07);">-105</div>
<div class="t" style="right:1040.5px;top:494.11px;font-size:13.3px;line-height:15.29px;color:#8a8a8a;font-weight:400;transform:scaleY(1.07);">-115</div>
<div class="t" style="right:1040.5px;top:507.36px;font-size:13.3px;line-height:15.29px;color:#8a8a8a;font-weight:400;transform:scaleY(1.07);">-125</div>
<div class="t" style="left:4px;top:526.64px;font-size:15.4px;line-height:17.71px;color:#fff;font-weight:700;transform:scaleY(1.02);">Ctr: 3.5 GHz</div>
<div class="t" style="right:544px;top:526.64px;font-size:15.4px;line-height:17.71px;color:#fff;font-weight:700;transform:scaleY(1.02);">Width: 110.6 MHz</div>
<div class="t" style="left:4px;top:546.64px;font-size:15.4px;line-height:17.71px;color:#fff;font-weight:700;transform:scaleY(1.02);">Res BW: 1000 Hz</div>
<div class="t" style="left:199px;top:546.64px;font-size:15.4px;line-height:17.71px;color:#fff;font-weight:700;transform:scaleY(1.02);">Info BW: 98.30 MHz</div>
<div class="r" style="left:540px;top:347px;width:175px;height:34px;background:#2f2f2f;border-radius:0 0 5px 0;"></div><div class="t" style="left:543.6px;top:347.45px;font-size:14px;line-height:16.1px;color:#e4e4e4;font-weight:400;transform:scaleY(1.02);">4 CC0</div><div class="t" style="left:543.6px;top:364.45px;font-size:14px;line-height:16.1px;color:#e4e4e4;font-weight:400;transform:scaleY(1.02);">Raw Main Time</div><svg width="1080" height="789"><path d="M705.5 359.5 L711.9000000000001 359.5 L708.7 368.5 Z" fill="#fff"/></svg>
<div class="t" style="left:543px;top:383.04px;font-size:15.4px;line-height:17.71px;color:#fff;font-weight:700;transform:scaleY(1.02);">Scale/Div 20.00 dB</div>
<div class="t" style="left:730px;top:383.04px;font-size:15.4px;line-height:17.71px;color:#fff;font-weight:700;transform:scaleY(1.02);">Ref Value 25.00 dBm</div>
<svg width="1080" height="789"><line x1="581.30" y1="404.6" x2="581.30" y2="542.8" stroke="#9a9a9a" stroke-width="1"/><line x1="581.3" y1="404.60" x2="1072.3" y2="404.60" stroke="#9a9a9a" stroke-width="1"/><line x1="630.40" y1="404.6" x2="630.40" y2="542.8" stroke="#9a9a9a" stroke-width="1"/><line x1="581.3" y1="418.42" x2="1072.3" y2="418.42" stroke="#9a9a9a" stroke-width="1"/><line x1="679.50" y1="404.6" x2="679.50" y2="542.8" stroke="#9a9a9a" stroke-width="1"/><line x1="581.3" y1="432.24" x2="1072.3" y2="432.24" stroke="#9a9a9a" stroke-width="1"/><line x1="728.60" y1="404.6" x2="728.60" y2="542.8" stroke="#9a9a9a" stroke-width="1"/><line x1="581.3" y1="446.06" x2="1072.3" y2="446.06" stroke="#9a9a9a" stroke-width="1"/><line x1="777.70" y1="404.6" x2="777.70" y2="542.8" stroke="#9a9a9a" stroke-width="1"/><line x1="581.3" y1="459.88" x2="1072.3" y2="459.88" stroke="#9a9a9a" stroke-width="1"/><line x1="826.80" y1="404.6" x2="826.80" y2="542.8" stroke="#9a9a9a" stroke-width="1"/><line x1="581.3" y1="473.70" x2="1072.3" y2="473.70" stroke="#9a9a9a" stroke-width="1"/><line x1="875.90" y1="404.6" x2="875.90" y2="542.8" stroke="#9a9a9a" stroke-width="1"/><line x1="581.3" y1="487.52" x2="1072.3" y2="487.52" stroke="#9a9a9a" stroke-width="1"/><line x1="925.00" y1="404.6" x2="925.00" y2="542.8" stroke="#9a9a9a" stroke-width="1"/><line x1="581.3" y1="501.34" x2="1072.3" y2="501.34" stroke="#9a9a9a" stroke-width="1"/><line x1="974.10" y1="404.6" x2="974.10" y2="542.8" stroke="#9a9a9a" stroke-width="1"/><line x1="581.3" y1="515.16" x2="1072.3" y2="515.16" stroke="#9a9a9a" stroke-width="1"/><line x1="1023.20" y1="404.6" x2="1023.20" y2="542.8" stroke="#9a9a9a" stroke-width="1"/><line x1="581.3" y1="528.98" x2="1072.3" y2="528.98" stroke="#9a9a9a" stroke-width="1"/><line x1="1072.30" y1="404.6" x2="1072.30" y2="542.8" stroke="#9a9a9a" stroke-width="1"/><line x1="581.3" y1="542.80" x2="1072.3" y2="542.80" stroke="#9a9a9a" stroke-width="1"/><rect x="581.8" y="422" width="490.5" height="28" fill="#ffff16"/><path d="M581.8 421.8h1.0V455.2h-1.0zM582.8 421.8h1.0V452.8h-1.0zM583.8 421.8h1.0V458.6h-1.0zM584.8 420.9h1.0V452.9h-1.0zM585.8 421.8h1.0V452.9h-1.0zM586.8 421.8h1.0V455.3h-1.0zM587.8 421.8h1.0V458.7h-1.0zM588.8 421.8h1.0V459.5h-1.0zM589.8 421.8h2.0V454.1h-2.0zM591.8 421.8h1.0V455.2h-1.0zM592.8 421.8h2.0V452.0h-2.0zM594.8 420.9h1.0V456.9h-1.0zM595.8 421.8h1.0V459.3h-1.0zM596.8 421.8h2.0V456.5h-2.0zM598.8 420.9h2.0V463.8h-2.0zM600.8 421.8h1.0V457.5h-1.0zM601.8 421.8h1.0V455.2h-1.0zM602.8 421.8h1.0V454.2h-1.0zM603.8 421.8h1.0V450.6h-1.0zM604.8 421.8h1.0V458.6h-1.0zM605.8 421.8h1.0V454.3h-1.0zM606.8 421.8h1.0V455.8h-1.0zM607.8 421.8h1.0V452.9h-1.0zM608.8 421.8h2.0V458.9h-2.0zM610.8 421.8h1.0V461.6h-1.0zM611.8 421.8h1.0V456.6h-1.0zM612.8 421.8h2.0V455.6h-2.0zM614.8 421.8h1.0V467.8h-1.0zM615.8 421.8h2.0V454.3h-2.0zM617.8 421.8h1.0V461.0h-1.0zM618.8 421.8h1.0V457.5h-1.0zM619.8 421.8h1.0V454.1h-1.0zM620.8 421.8h1.0V460.1h-1.0zM621.8 421.8h1.0V463.5h-1.0zM622.8 421.8h1.0V458.4h-1.0zM623.8 421.8h1.0V462.5h-1.0zM624.8 421.8h1.0V460.2h-1.0zM625.8 421.8h1.0V454.8h-1.0zM626.8 421.8h1.0V455.7h-1.0zM627.8 421.8h1.0V451.0h-1.0zM628.8 421.8h1.0V455.9h-1.0zM629.8 420.9h1.0V459.5h-1.0zM630.8 421.8h1.0V455.3h-1.0zM631.8 421.8h1.0V458.0h-1.0zM632.8 421.8h1.0V455.4h-1.0zM633.8 421.8h1.0V454.1h-1.0zM634.8 421.8h1.0V457.6h-1.0zM635.8 421.8h1.0V464.8h-1.0zM636.8 421.8h2.0V454.0h-2.0zM638.8 420.9h1.0V456.9h-1.0zM639.8 420.9h1.0V460.2h-1.0zM640.8 421.8h1.0V456.3h-1.0zM641.8 421.8h1.0V459.3h-1.0zM642.8 421.8h1.0V458.9h-1.0zM643.8 421.8h1.0V459.9h-1.0zM644.8 421.8h1.0V453.6h-1.0zM645.8 421.8h1.0V466.4h-1.0zM646.8 421.8h1.0V462.4h-1.0zM647.8 421.8h1.0V458.7h-1.0zM648.8 421.8h1.0V456.5h-1.0zM649.8 421.8h1.0V457.2h-1.0zM650.8 421.8h1.0V454.9h-1.0zM651.8 421.8h1.0V454.2h-1.0zM652.8 421.8h1.0V460.2h-1.0zM653.8 421.8h1.0V460.0h-1.0zM654.8 421.8h1.0V460.0h-1.0zM655.8 421.8h1.0V466.1h-1.0zM656.8 421.8h1.0V456.3h-1.0zM657.8 421.8h1.0V462.7h-1.0zM658.8 420.9h1.0V456.6h-1.0zM659.8 421.8h1.0V463.9h-1.0zM660.8 421.8h1.0V460.5h-1.0zM661.8 421.8h1.0V455.1h-1.0zM662.8 421.8h1.0V457.3h-1.0zM663.8 421.8h1.0V459.3h-1.0zM664.8 421.8h2.0V455.0h-2.0zM666.8 421.8h1.0V455.2h-1.0zM667.8 421.8h1.0V456.3h-1.0zM668.8 421.8h2.0V452.1h-2.0zM670.8 421.8h2.0V454.0h-2.0zM672.8 421.8h1.0V458.3h-1.0zM673.8 421.8h1.0V455.7h-1.0zM674.8 421.8h1.0V466.4h-1.0zM675.8 421.8h1.0V453.5h-1.0zM676.8 420.9h1.0V452.6h-1.0zM677.8 421.8h2.0V454.4h-2.0zM679.8 421.8h1.0V458.7h-1.0zM680.8 421.8h1.0V454.6h-1.0zM681.8 421.8h2.0V456.9h-2.0zM683.8 420.9h1.0V462.3h-1.0zM684.8 421.8h2.0V455.6h-2.0zM686.8 421.8h1.0V456.0h-1.0zM687.8 421.8h2.0V457.9h-2.0zM689.8 421.8h2.0V461.0h-2.0zM691.8 421.8h1.0V456.0h-1.0zM692.8 421.8h2.0V455.6h-2.0zM694.8 421.8h1.0V454.4h-1.0zM695.8 421.8h1.0V452.6h-1.0zM696.8 421.8h1.0V451.0h-1.0zM697.8 421.8h2.0V455.2h-2.0zM699.8 421.8h1.0V453.2h-1.0zM700.8 421.8h1.0V454.6h-1.0zM701.8 421.8h1.0V452.3h-1.0zM702.8 421.8h2.0V451.9h-2.0zM704.8 421.8h1.0V460.8h-1.0zM705.8 421.8h2.0V456.9h-2.0zM707.8 421.8h1.0V459.8h-1.0zM708.8 421.8h1.0V458.0h-1.0zM709.8 421.8h1.0V452.6h-1.0zM710.8 421.8h1.0V456.5h-1.0zM711.8 421.8h1.0V456.5h-1.0zM712.8 421.8h1.0V456.1h-1.0zM713.8 420.9h1.0V456.3h-1.0zM714.8 421.8h1.0V451.7h-1.0zM715.8 421.8h1.0V455.8h-1.0zM716.8 421.8h1.0V459.7h-1.0zM717.8 421.8h2.0V454.2h-2.0zM719.8 421.8h1.0V456.7h-1.0zM720.8 421.8h1.0V459.5h-1.0zM721.8 421.8h1.0V451.0h-1.0zM722.8 421.8h2.0V454.3h-2.0zM724.8 421.8h1.0V451.7h-1.0zM725.8 420.9h1.0V458.1h-1.0zM726.8 421.8h1.0V458.7h-1.0zM727.8 421.8h1.0V456.3h-1.0zM728.8 421.8h1.0V455.9h-1.0zM729.8 421.8h1.0V454.3h-1.0zM730.8 420.9h1.0V455.4h-1.0zM731.8 421.8h2.0V453.3h-2.0zM733.8 421.8h1.0V455.8h-1.0zM734.8 421.8h1.0V460.0h-1.0zM735.8 421.8h1.0V458.1h-1.0zM736.8 420.9h1.0V456.8h-1.0zM737.8 421.8h1.0V453.5h-1.0zM738.8 421.8h1.0V455.7h-1.0zM739.8 421.8h1.0V457.5h-1.0zM740.8 420.9h1.0V456.7h-1.0zM741.8 421.8h1.0V453.3h-1.0zM742.8 421.8h1.0V457.3h-1.0zM743.8 421.8h1.0V455.9h-1.0zM744.8 421.8h2.0V456.2h-2.0zM746.8 421.8h2.0V455.1h-2.0zM748.8 421.8h1.0V459.0h-1.0zM749.8 420.9h2.0V456.3h-2.0zM751.8 420.9h1.0V455.3h-1.0zM752.8 421.8h1.0V451.8h-1.0zM753.8 421.8h1.0V450.8h-1.0zM754.8 421.8h1.0V454.5h-1.0zM755.8 421.8h1.0V454.7h-1.0zM756.8 421.8h1.0V452.7h-1.0zM757.8 421.8h1.0V458.1h-1.0zM758.8 421.8h2.0V455.6h-2.0zM760.8 420.9h1.0V459.5h-1.0zM761.8 421.8h1.0V459.5h-1.0zM762.8 421.8h2.0V459.4h-2.0zM764.8 421.8h1.0V453.8h-1.0zM765.8 421.8h1.0V456.4h-1.0zM766.8 421.8h2.0V452.8h-2.0zM768.8 421.8h1.0V459.9h-1.0zM769.8 421.8h2.0V455.0h-2.0zM771.8 421.8h1.0V453.3h-1.0zM772.8 421.8h1.0V463.5h-1.0zM773.8 421.8h1.0V453.4h-1.0zM774.8 421.8h1.0V459.1h-1.0zM775.8 421.8h1.0V457.3h-1.0zM776.8 421.8h1.0V458.3h-1.0zM777.8 421.8h2.0V451.7h-2.0zM779.8 421.8h1.0V455.3h-1.0zM780.8 421.8h1.0V460.3h-1.0zM781.8 421.8h1.0V468.8h-1.0zM782.8 421.8h1.0V453.2h-1.0zM783.8 421.8h1.0V460.2h-1.0zM784.8 421.8h1.0V456.2h-1.0zM785.8 420.9h2.0V453.2h-2.0zM787.8 420.9h1.0V456.4h-1.0zM788.8 421.8h1.0V457.7h-1.0zM789.8 420.9h1.0V454.1h-1.0zM790.8 420.9h1.0V461.0h-1.0zM791.8 421.8h1.0V457.2h-1.0zM792.8 421.8h1.0V454.7h-1.0zM793.8 421.8h1.0V452.1h-1.0zM794.8 421.8h1.0V462.2h-1.0zM795.8 421.8h1.0V454.5h-1.0zM796.8 420.9h1.0V456.5h-1.0zM797.8 421.8h1.0V459.0h-1.0zM798.8 421.8h1.0V451.4h-1.0zM799.8 420.9h1.0V455.4h-1.0zM800.8 421.8h1.0V459.8h-1.0zM801.8 421.8h1.0V460.0h-1.0zM802.8 421.8h2.0V456.2h-2.0zM804.8 421.8h2.0V454.8h-2.0zM806.8 421.8h1.0V462.9h-1.0zM807.8 421.8h1.0V452.7h-1.0zM808.8 420.9h2.0V462.7h-2.0zM810.8 421.8h1.0V459.4h-1.0zM811.8 420.9h1.0V450.9h-1.0zM812.8 421.8h2.0V455.9h-2.0zM814.8 421.8h1.0V454.0h-1.0zM815.8 421.8h1.0V460.2h-1.0zM816.8 421.8h1.0V452.5h-1.0zM817.8 421.8h2.0V451.2h-2.0zM819.8 421.8h2.0V457.1h-2.0zM821.8 421.8h1.0V459.7h-1.0zM822.8 420.9h1.0V455.4h-1.0zM823.8 421.8h2.0V451.2h-2.0zM825.8 421.8h1.0V456.5h-1.0zM826.8 420.9h1.0V456.2h-1.0zM827.8 421.8h1.0V463.3h-1.0zM828.8 421.8h1.0V455.8h-1.0zM829.8 421.8h1.0V457.4h-1.0zM830.8 421.8h2.0V452.7h-2.0zM832.8 421.8h2.0V458.1h-2.0zM834.8 421.8h1.0V459.2h-1.0zM835.8 421.8h2.0V456.0h-2.0zM837.8 421.8h2.0V458.1h-2.0zM839.8 421.8h1.0V454.4h-1.0zM840.8 421.8h1.0V465.9h-1.0zM841.8 421.8h1.0V456.3h-1.0zM842.8 420.9h1.0V461.8h-1.0zM843.8 421.8h1.0V455.1h-1.0zM844.8 421.8h1.0V458.7h-1.0zM845.8 421.8h1.0V460.0h-1.0zM846.8 420.9h1.0V452.8h-1.0zM847.8 421.8h2.0V456.8h-2.0zM849.8 420.9h2.0V459.8h-2.0zM851.8 421.8h1.0V451.2h-1.0zM852.8 421.8h1.0V452.1h-1.0zM853.8 421.8h1.0V462.6h-1.0zM854.8 421.8h1.0V466.6h-1.0zM855.8 421.8h1.0V461.4h-1.0zM856.8 421.8h1.0V459.7h-1.0zM857.8 421.8h1.0V451.8h-1.0zM858.8 421.8h1.0V458.4h-1.0zM859.8 420.9h1.0V454.3h-1.0zM860.8 421.8h1.0V457.9h-1.0zM861.8 421.8h1.0V454.2h-1.0zM862.8 421.8h1.0V453.0h-1.0zM863.8 421.8h1.0V451.1h-1.0zM864.8 421.8h1.0V453.8h-1.0zM865.8 421.8h1.0V457.6h-1.0zM866.8 421.8h1.0V458.8h-1.0zM867.8 421.8h1.0V459.0h-1.0zM868.8 421.8h1.0V465.7h-1.0zM869.8 421.8h1.0V460.5h-1.0zM870.8 421.8h1.0V459.0h-1.0zM871.8 421.8h1.0V458.9h-1.0zM872.8 420.9h1.0V450.7h-1.0zM873.8 421.8h1.0V454.3h-1.0zM874.8 421.8h1.0V453.5h-1.0zM875.8 421.8h2.0V453.6h-2.0zM877.8 421.8h1.0V458.1h-1.0zM878.8 421.8h1.0V456.1h-1.0zM879.8 420.9h2.0V454.4h-2.0zM881.8 421.8h1.0V460.2h-1.0zM882.8 421.8h1.0V463.8h-1.0zM883.8 421.8h1.0V455.7h-1.0zM884.8 421.8h1.0V453.5h-1.0zM885.8 421.8h1.0V464.3h-1.0zM886.8 421.8h1.0V463.5h-1.0zM887.8 421.8h1.0V455.8h-1.0zM888.8 421.8h1.0V460.6h-1.0zM889.8 421.8h1.0V457.8h-1.0zM890.8 421.8h2.0V461.4h-2.0zM892.8 421.8h2.0V454.0h-2.0zM894.8 421.8h2.0V450.9h-2.0zM896.8 420.9h2.0V460.6h-2.0zM898.8 420.9h1.0V453.2h-1.0zM899.8 421.8h1.0V462.9h-1.0zM900.8 421.8h2.0V451.4h-2.0zM902.8 421.8h2.0V452.5h-2.0zM904.8 421.8h1.0V450.6h-1.0zM905.8 421.8h2.0V460.5h-2.0zM907.8 421.8h1.0V455.2h-1.0zM908.8 421.8h1.0V457.3h-1.0zM909.8 421.8h1.0V460.0h-1.0zM910.8 421.8h1.0V468.3h-1.0zM911.8 421.8h1.0V451.6h-1.0zM912.8 420.9h1.0V456.7h-1.0zM913.8 421.8h1.0V453.3h-1.0zM914.8 421.8h1.0V458.5h-1.0zM915.8 421.8h2.0V456.6h-2.0zM917.8 421.8h1.0V465.3h-1.0zM918.8 421.8h1.0V454.5h-1.0zM919.8 421.8h1.0V461.0h-1.0zM920.8 421.8h1.0V455.3h-1.0zM921.8 421.8h1.0V459.9h-1.0zM922.8 421.8h1.0V458.2h-1.0zM923.8 421.8h1.0V463.0h-1.0zM924.8 421.8h1.0V457.8h-1.0zM925.8 421.8h2.0V458.8h-2.0zM927.8 421.8h1.0V457.4h-1.0zM928.8 421.8h1.0V458.1h-1.0zM929.8 421.8h1.0V455.7h-1.0zM930.8 421.8h2.0V457.4h-2.0zM932.8 421.8h1.0V454.2h-1.0zM933.8 421.8h1.0V459.3h-1.0zM934.8 421.8h1.0V457.0h-1.0zM935.8 421.8h1.0V463.5h-1.0zM936.8 421.8h1.0V459.3h-1.0zM937.8 421.8h1.0V454.7h-1.0zM938.8 421.8h1.0V456.9h-1.0zM939.8 421.8h1.0V467.2h-1.0zM940.8 421.8h1.0V458.9h-1.0zM941.8 421.8h1.0V457.4h-1.0zM942.8 421.8h1.0V456.5h-1.0zM943.8 421.8h1.0V454.4h-1.0zM944.8 421.8h1.0V456.1h-1.0zM945.8 421.8h1.0V453.0h-1.0zM946.8 421.8h2.0V459.2h-2.0zM948.8 421.8h1.0V452.3h-1.0zM949.8 421.8h1.0V456.7h-1.0zM950.8 421.8h1.0V456.5h-1.0zM951.8 421.8h1.0V454.4h-1.0zM952.8 421.8h1.0V456.1h-1.0zM953.8 421.8h1.0V457.4h-1.0zM954.8 421.8h1.0V454.2h-1.0zM955.8 421.8h1.0V459.5h-1.0zM956.8 421.8h1.0V461.8h-1.0zM957.8 421.8h1.0V458.4h-1.0zM958.8 421.8h1.0V453.2h-1.0zM959.8 421.8h1.0V454.8h-1.0zM960.8 420.9h1.0V454.7h-1.0zM961.8 421.8h1.0V454.4h-1.0zM962.8 421.8h1.0V454.4h-1.0zM963.8 421.8h1.0V460.5h-1.0zM964.8 421.8h2.0V451.8h-2.0zM966.8 420.9h1.0V464.6h-1.0zM967.8 421.8h1.0V459.6h-1.0zM968.8 421.8h1.0V454.3h-1.0zM969.8 421.8h1.0V459.6h-1.0zM970.8 421.8h1.0V452.6h-1.0zM971.8 421.8h1.0V457.8h-1.0zM972.8 421.8h1.0V454.2h-1.0zM973.8 420.9h1.0V457.5h-1.0zM974.8 421.8h1.0V455.8h-1.0zM975.8 421.8h2.0V459.2h-2.0zM977.8 421.8h1.0V461.8h-1.0zM978.8 420.9h2.0V458.2h-2.0zM980.8 421.8h1.0V452.9h-1.0zM981.8 421.8h1.0V459.2h-1.0zM982.8 421.8h1.0V455.9h-1.0zM983.8 421.8h1.0V454.2h-1.0zM984.8 420.9h1.0V453.6h-1.0zM985.8 421.8h2.0V455.7h-2.0zM987.8 421.8h2.0V450.7h-2.0zM989.8 420.9h1.0V455.9h-1.0zM990.8 421.8h1.0V457.6h-1.0zM991.8 421.8h1.0V459.5h-1.0zM992.8 421.8h1.0V465.3h-1.0zM993.8 421.8h1.0V455.5h-1.0zM994.8 420.9h1.0V458.7h-1.0zM995.8 421.8h1.0V453.8h-1.0zM996.8 421.8h1.0V468.6h-1.0zM997.8 421.8h1.0V458.9h-1.0zM998.8 421.8h1.0V452.4h-1.0zM999.8 421.8h2.0V454.6h-2.0zM1001.8 421.8h1.0V463.4h-1.0zM1002.8 421.8h1.0V452.9h-1.0zM1003.8 421.8h2.0V462.6h-2.0zM1005.8 421.8h1.0V455.6h-1.0zM1006.8 421.8h1.0V455.9h-1.0zM1007.8 421.8h1.0V452.7h-1.0zM1008.8 421.8h2.0V454.2h-2.0zM1010.8 420.9h1.0V454.9h-1.0zM1011.8 421.8h1.0V458.3h-1.0zM1012.8 421.8h1.0V461.3h-1.0zM1013.8 421.8h2.0V455.0h-2.0zM1015.8 421.8h1.0V452.5h-1.0zM1016.8 420.9h1.0V455.1h-1.0zM1017.8 421.8h1.0V455.3h-1.0zM1018.8 421.8h1.0V451.5h-1.0zM1019.8 421.8h2.0V460.1h-2.0zM1021.8 421.8h2.0V457.7h-2.0zM1023.8 421.8h1.0V455.0h-1.0zM1024.8 420.9h1.0V457.4h-1.0zM1025.8 421.8h1.0V452.8h-1.0zM1026.8 421.8h1.0V458.6h-1.0zM1027.8 421.8h1.0V460.4h-1.0zM1028.8 421.8h1.0V459.3h-1.0zM1029.8 421.8h1.0V460.0h-1.0zM1030.8 421.8h1.0V456.6h-1.0zM1031.8 421.8h1.0V458.4h-1.0zM1032.8 421.8h1.0V451.3h-1.0zM1033.8 421.8h1.0V469.0h-1.0zM1034.8 421.8h2.0V459.1h-2.0zM1036.8 421.8h2.0V455.3h-2.0zM1038.8 421.8h1.0V454.6h-1.0zM1039.8 421.8h1.0V454.4h-1.0zM1040.8 421.8h1.0V453.8h-1.0zM1041.8 421.8h2.0V459.4h-2.0zM1043.8 421.8h2.0V459.4h-2.0zM1045.8 421.8h2.0V460.2h-2.0zM1047.8 421.8h1.0V454.4h-1.0zM1048.8 421.8h2.0V455.5h-2.0zM1050.8 421.8h1.0V457.2h-1.0zM1051.8 421.8h2.0V456.5h-2.0zM1053.8 421.8h2.0V460.1h-2.0zM1055.8 421.8h2.0V453.1h-2.0zM1057.8 421.8h2.0V459.4h-2.0zM1059.8 420.9h2.0V454.1h-2.0zM1061.8 421.8h1.0V457.9h-1.0zM1062.8 421.8h1.0V451.9h-1.0zM1063.8 421.8h2.0V454.6h-2.0zM1065.8 421.8h1.0V458.3h-1.0zM1066.8 421.8h2.0V454.3h-2.0zM1068.8 421.8h2.0V460.2h-2.0zM1070.8 421.8h1.0V462.4h-1.0zM1071.8 421.8h0.5V460.2h-0.5z" fill="#ffff16"/></svg>
<div class="t" style="right:505px;top:408.61px;font-size:13.3px;line-height:15.29px;color:#8a8a8a;font-weight:400;transform:scaleY(1.07);">5.00</div>
<div class="t" style="right:505px;top:423.11px;font-size:13.3px;line-height:15.29px;color:#8a8a8a;font-weight:400;transform:scaleY(1.07);">-15.0</div>
<div class="t" style="right:505px;top:437.36px;font-size:13.3px;line-height:15.29px;color:#8a8a8a;font-weight:400;transform:scaleY(1.07);">-35.0</div>
<div class="t" style="right:505px;top:451.86px;font-size:13.3px;line-height:15.29px;color:#8a8a8a;font-weight:400;transform:scaleY(1.07);">-55.0</div>
<div class="t" style="right:505px;top:466.61px;font-size:13.3px;line-height:15.29px;color:#8a8a8a;font-weight:400;transform:scaleY(1.07);">-75.0</div>
<div class="t" style="right:505px;top:481.11px;font-size:13.3px;line-height:15.29px;color:#8a8a8a;font-weight:400;transform:scaleY(1.07);">-95.0</div>
<div class="t" style="right:505px;top:495.61px;font-size:13.3px;line-height:15.29px;color:#8a8a8a;font-weight:400;transform:scaleY(1.07);">-115</div>
<div class="t" style="right:505px;top:510.11px;font-size:13.3px;line-height:15.29px;color:#8a8a8a;font-weight:400;transform:scaleY(1.07);">-135</div>
<div class="t" style="right:505px;top:524.86px;font-size:13.3px;line-height:15.29px;color:#8a8a8a;font-weight:400;transform:scaleY(1.07);">-155</div>
<div class="t" style="left:541px;top:546.64px;font-size:15.4px;line-height:17.71px;color:#fff;font-weight:700;transform:scaleY(1.02);">Start: 0.00 ns</div>
<div class="t" style="right:8.5px;top:546.44px;font-size:15.4px;line-height:17.71px;color:#fff;font-weight:700;transform:scaleY(1.02);">Stop: 22.00 ms</div>
<div class="r" style="left:3px;top:568px;width:175px;height:34.4px;background:#2f2f2f;border-radius:0 0 5px 0;"></div><div class="t" style="left:7.5px;top:577.45px;font-size:14px;line-height:16.1px;color:#e4e4e4;font-weight:400;transform:scaleY(1.02);">5 CC0 Frame Summary</div><svg width="1080" height="789"><path d="M169.3 580.5 L175.7 580.5 L172.5 589.5 Z" fill="#fff"/></svg>
<div class="r" style="left:181.5px;top:610px;width:283.5px;height:20.5px;background:#333334;"></div>
<div class="r" style="left:8px;top:630.5px;width:173.5px;height:119.5px;background:#333334;"></div>
<svg width="1080" height="789"><line x1="8" y1="610" x2="8" y2="750" stroke="#464646" stroke-width="1"/><line x1="181.5" y1="610" x2="181.5" y2="750" stroke="#464646" stroke-width="1"/><line x1="261" y1="610" x2="261" y2="750" stroke="#464646" stroke-width="1"/><line x1="385" y1="610" x2="385" y2="750" stroke="#464646" stroke-width="1"/><line x1="465" y1="610" x2="465" y2="750" stroke="#464646" stroke-width="1"/><line x1="8" y1="610" x2="465" y2="610" stroke="#464646" stroke-width="1"/><line x1="8" y1="630.5" x2="465" y2="630.5" stroke="#464646" stroke-width="1"/><line x1="8" y1="650.5" x2="465" y2="650.5" stroke="#464646" stroke-width="1"/><line x1="8" y1="670.5" x2="465" y2="670.5" stroke="#464646" stroke-width="1"/><line x1="8" y1="690.5" x2="465" y2="690.5" stroke="#464646" stroke-width="1"/><line x1="8" y1="710.5" x2="465" y2="710.5" stroke="#464646" stroke-width="1"/><line x1="8" y1="730.5" x2="465" y2="730.5" stroke="#464646" stroke-width="1"/><line x1="8" y1="750" x2="465" y2="750" stroke="#464646" stroke-width="1"/></svg>
<div class="t" style="left:21.25px;width:400px;text-align:center;top:612.03px;font-size:15.6px;line-height:17.94px;color:#e0e0e0;font-weight:400;transform:scaleY(1.02);">EVM</div>
<div class="t" style="left:123.0px;width:400px;text-align:center;top:612.03px;font-size:15.6px;line-height:17.94px;color:#e0e0e0;font-weight:400;transform:scaleY(1.02);">Power per RE</div>
<div class="t" style="left:225.0px;width:400px;text-align:center;top:612.03px;font-size:15.6px;line-height:17.94px;color:#e0e0e0;font-weight:400;transform:scaleY(1.02);">Num.RB</div>
<div class="t" style="left:12px;top:632.03px;font-size:15.6px;line-height:17.94px;color:#c99a1d;font-weight:400;transform:scaleY(1.02);">PDSCH (BWP1)</div>
<div class="t" style="left:21.25px;width:400px;text-align:center;top:632.03px;font-size:15.6px;line-height:17.94px;color:#fff;font-weight:400;transform:scaleY(1.02);">22.25 %</div>
<div class="t" style="left:123.0px;width:400px;text-align:center;top:632.03px;font-size:15.6px;line-height:17.94px;color:#fff;font-weight:400;transform:scaleY(1.02);">-45.30 dBm</div>
<div class="t" style="left:225.0px;width:400px;text-align:center;top:632.03px;font-size:15.6px;line-height:17.94px;color:#fff;font-weight:400;transform:scaleY(1.02);">5460</div>
<div class="t" style="left:12px;top:652.03px;font-size:15.6px;line-height:17.94px;color:#17399c;font-weight:400;transform:scaleY(1.02);">PDSCH DMRS (BWP1)</div>
<div class="t" style="left:21.25px;width:400px;text-align:center;top:652.03px;font-size:15.6px;line-height:17.94px;color:#fff;font-weight:400;transform:scaleY(1.02);">8.73 %</div>
<div class="t" style="left:123.0px;width:400px;text-align:center;top:652.03px;font-size:15.6px;line-height:17.94px;color:#fff;font-weight:400;transform:scaleY(1.02);">-45.30 dBm</div>
<div class="t" style="left:225.0px;width:400px;text-align:center;top:652.03px;font-size:15.6px;line-height:17.94px;color:#fff;font-weight:400;transform:scaleY(1.02);">5460</div>
<div class="t" style="left:12px;top:672.03px;font-size:15.6px;line-height:17.94px;color:#e28597;font-weight:400;transform:scaleY(1.02);">PDSCH PTRS (BWP1)</div>
<div class="r" style="left:213.65px;top:681.0px;width:4.6px;height:1.3px;background:#f0f0f0;"></div>
<div class="r" style="left:218.95px;top:681.0px;width:4.6px;height:1.3px;background:#f0f0f0;"></div>
<div class="r" style="left:224.25px;top:681.0px;width:4.6px;height:1.3px;background:#f0f0f0;"></div>
<div class="r" style="left:315.4px;top:681.0px;width:4.6px;height:1.3px;background:#f0f0f0;"></div>
<div class="r" style="left:320.7px;top:681.0px;width:4.6px;height:1.3px;background:#f0f0f0;"></div>
<div class="r" style="left:326.0px;top:681.0px;width:4.6px;height:1.3px;background:#f0f0f0;"></div>
<div class="r" style="left:417.4px;top:681.0px;width:4.6px;height:1.3px;background:#f0f0f0;"></div>
<div class="r" style="left:422.7px;top:681.0px;width:4.6px;height:1.3px;background:#f0f0f0;"></div>
<div class="r" style="left:428.0px;top:681.0px;width:4.6px;height:1.3px;background:#f0f0f0;"></div>
<div class="t" style="left:12px;top:692.03px;font-size:15.6px;line-height:17.94px;color:#ecec3c;font-weight:400;transform:scaleY(1.02);">PDCCH (BWP1)</div>
<div class="r" style="left:213.65px;top:701.0px;width:4.6px;height:1.3px;background:#f0f0f0;"></div>
<div class="r" style="left:218.95px;top:701.0px;width:4.6px;height:1.3px;background:#f0f0f0;"></div>
<div class="r" style="left:224.25px;top:701.0px;width:4.6px;height:1.3px;background:#f0f0f0;"></div>
<div class="r" style="left:315.4px;top:701.0px;width:4.6px;height:1.3px;background:#f0f0f0;"></div>
<div class="r" style="left:320.7px;top:701.0px;width:4.6px;height:1.3px;background:#f0f0f0;"></div>
<div class="r" style="left:326.0px;top:701.0px;width:4.6px;height:1.3px;background:#f0f0f0;"></div>
<div class="r" style="left:417.4px;top:701.0px;width:4.6px;height:1.3px;background:#f0f0f0;"></div>
<div class="r" style="left:422.7px;top:701.0px;width:4.6px;height:1.3px;background:#f0f0f0;"></div>
<div class="r" style="left:428.0px;top:701.0px;width:4.6px;height:1.3px;background:#f0f0f0;"></div>
<div class="t" style="left:12px;top:712.03px;font-size:15.6px;line-height:17.94px;color:#2a82b4;font-weight:400;transform:scaleY(1.02);">PDCCH DMRS (BWP1)</div>
<div class="r" style="left:213.65px;top:721.0px;width:4.6px;height:1.3px;background:#f0f0f0;"></div>
<div class="r" style="left:218.95px;top:721.0px;width:4.6px;height:1.3px;background:#f0f0f0;"></div>
<div class="r" style="left:224.25px;top:721.0px;width:4.6px;height:1.3px;background:#f0f0f0;"></div>
<div class="r" style="left:315.4px;top:721.0px;width:4.6px;height:1.3px;background:#f0f0f0;"></div>
<div class="r" style="left:320.7px;top:721.0px;width:4.6px;height:1.3px;background:#f0f0f0;"></div>
<div class="r" style="left:326.0px;top:721.0px;width:4.6px;height:1.3px;background:#f0f0f0;"></div>
<div class="r" style="left:417.4px;top:721.0px;width:4.6px;height:1.3px;background:#f0f0f0;"></div>
<div class="r" style="left:422.7px;top:721.0px;width:4.6px;height:1.3px;background:#f0f0f0;"></div>
<div class="r" style="left:428.0px;top:721.0px;width:4.6px;height:1.3px;background:#f0f0f0;"></div>
<div class="t" style="left:12px;top:731.78px;font-size:15.6px;line-height:17.94px;color:#d41f24;font-weight:400;transform:scaleY(1.02);">CSI-RS (BWP1)</div>
<div class="r" style="left:213.65px;top:740.75px;width:4.6px;height:1.3px;background:#f0f0f0;"></div>
<div class="r" style="left:218.95px;top:740.75px;width:4.6px;height:1.3px;background:#f0f0f0;"></div>
<div class="r" style="left:224.25px;top:740.75px;width:4.6px;height:1.3px;background:#f0f0f0;"></div>
<div class="r" style="left:315.4px;top:740.75px;width:4.6px;height:1.3px;background:#f0f0f0;"></div>
<div class="r" style="left:320.7px;top:740.75px;width:4.6px;height:1.3px;background:#f0f0f0;"></div>
<div class="r" style="left:326.0px;top:740.75px;width:4.6px;height:1.3px;background:#f0f0f0;"></div>
<div class="r" style="left:417.4px;top:740.75px;width:4.6px;height:1.3px;background:#f0f0f0;"></div>
<div class="r" style="left:422.7px;top:740.75px;width:4.6px;height:1.3px;background:#f0f0f0;"></div>
<div class="r" style="left:428.0px;top:740.75px;width:4.6px;height:1.3px;background:#f0f0f0;"></div>
<div class="r" style="left:540px;top:568px;width:175px;height:34.4px;background:#2f2f2f;border-radius:0 0 5px 0;"></div><div class="t" style="left:543.6px;top:577.45px;font-size:14px;line-height:16.1px;color:#e4e4e4;font-weight:400;transform:scaleY(1.02);">6 CC0 Error Summary</div><svg width="1080" height="789"><path d="M705.5 580.5 L711.9000000000001 580.5 L708.7 589.5 Z" fill="#fff"/></svg>
<div class="r" style="left:543.5px;top:609.5px;width:173.0px;height:180px;background:#333334;"></div>
<svg width="1080" height="789"><line x1="543.5" y1="609.5" x2="543.5" y2="789" stroke="#464646" stroke-width="1"/><line x1="716.5" y1="609.5" x2="716.5" y2="789" stroke="#464646" stroke-width="1"/><line x1="830" y1="609.5" x2="830" y2="789" stroke="#464646" stroke-width="1"/><line x1="543.5" y1="609.5" x2="830" y2="609.5" stroke="#464646" stroke-width="1"/><line x1="543.5" y1="630" x2="830" y2="630" stroke="#464646" stroke-width="1"/><line x1="543.5" y1="650" x2="830" y2="650" stroke="#464646" stroke-width="1"/><line x1="543.5" y1="670" x2="830" y2="670" stroke="#464646" stroke-width="1"/><line x1="543.5" y1="690" x2="830" y2="690" stroke="#464646" stroke-width="1"/><line x1="543.5" y1="709.5" x2="830" y2="709.5" stroke="#464646" stroke-width="1"/><line x1="543.5" y1="729.5" x2="830" y2="729.5" stroke="#464646" stroke-width="1"/><line x1="543.5" y1="749.5" x2="830" y2="749.5" stroke="#464646" stroke-width="1"/><line x1="543.5" y1="769.5" x2="830" y2="769.5" stroke="#464646" stroke-width="1"/></svg>
<div class="t" style="left:548px;top:611.28px;font-size:15.6px;line-height:17.94px;color:#e8e8e8;font-weight:400;transform:scaleY(1.02);">Channel Power</div>
<div class="t" style="right:254px;top:611.28px;font-size:15.6px;line-height:17.94px;color:#f4f4f4;font-weight:400;transform:scaleY(1.02);">-10.16 dBm</div>
<div class="t" style="left:548px;top:631.53px;font-size:15.6px;line-height:17.94px;color:#e8e8e8;font-weight:400;transform:scaleY(1.02);">Channel Power (Active)</div>
<div class="t" style="right:254px;top:631.53px;font-size:15.6px;line-height:17.94px;color:#f4f4f4;font-weight:400;transform:scaleY(1.02);">-10.16 dBm</div>
<div class="t" style="left:548px;top:651.53px;font-size:15.6px;line-height:17.94px;color:#e8e8e8;font-weight:400;transform:scaleY(1.02);">EVM</div>
<div class="t" style="right:254px;top:651.53px;font-size:15.6px;line-height:17.94px;color:#f4f4f4;font-weight:400;transform:scaleY(1.02);">21.87 %</div>
<div class="t" style="left:548px;top:671.53px;font-size:15.6px;line-height:17.94px;color:#e8e8e8;font-weight:400;transform:scaleY(1.02);">EVM Peak</div>
<div class="t" style="right:254px;top:671.53px;font-size:15.6px;line-height:17.94px;color:#f4f4f4;font-weight:400;transform:scaleY(1.02);">71.25 %</div>
<div class="t" style="left:548px;top:691.28px;font-size:15.6px;line-height:17.94px;color:#e8e8e8;font-weight:400;transform:scaleY(1.02);">Frequency Error</div>
<div class="t" style="right:254px;top:691.28px;font-size:15.6px;line-height:17.94px;color:#f4f4f4;font-weight:400;transform:scaleY(1.02);">59.8 mHz</div>
<div class="t" style="left:548px;top:711.03px;font-size:15.6px;line-height:17.94px;color:#e8e8e8;font-weight:400;transform:scaleY(1.02);">Symbol Clock Error</div>
<div class="t" style="right:254px;top:711.03px;font-size:15.6px;line-height:17.94px;color:#f4f4f4;font-weight:400;transform:scaleY(1.02);">0.000 ppm</div>
<div class="t" style="left:548px;top:731.03px;font-size:15.6px;line-height:17.94px;color:#e8e8e8;font-weight:400;transform:scaleY(1.02);">IQ Offset</div>
<div class="t" style="right:254px;top:731.03px;font-size:15.6px;line-height:17.94px;color:#f4f4f4;font-weight:400;transform:scaleY(1.02);">-47.83 dB</div>
<div class="t" style="left:548px;top:751.03px;font-size:15.6px;line-height:17.94px;color:#e8e8e8;font-weight:400;transform:scaleY(1.02);">Time Offset</div>
<div class="t" style="right:254px;top:751.03px;font-size:15.6px;line-height:17.94px;color:#f4f4f4;font-weight:400;transform:scaleY(1.02);">1.597 ms</div>
<div class="t" style="left:548px;top:770.78px;font-size:15.6px;line-height:17.94px;color:#e8e8e8;font-weight:400;transform:scaleY(1.02);">Sync Correlation</div>
<div class="t" style="right:254px;top:770.78px;font-size:15.6px;line-height:17.94px;color:#f4f4f4;font-weight:400;transform:scaleY(1.02);">99.9 %</div>
<div class="r" style="left:1064px;top:604px;width:9px;height:162px;background:#9a9a9a;"></div>
<div class="r" style="left:0px;top:786.5px;width:1074px;height:2.5px;background:#6a6a6c;"></div>
</body></html>
